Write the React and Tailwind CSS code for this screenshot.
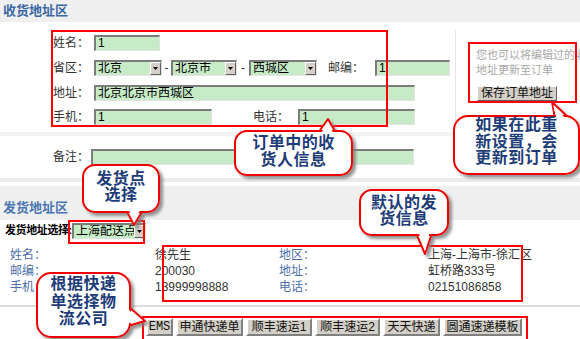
import React from 'react';

const Field = ({ w, value }) => (
  <div className={`h-[16px] shrink-0 bg-[#c6ebc6] border-t-2 border-l-2 border-t-[#7c7c7c] border-l-[#7c7c7c] border-b border-r border-b-[#e4e4e4] border-r-[#e4e4e4] pl-[2px] text-[12px] leading-[13px] text-black whitespace-nowrap overflow-hidden ${w}`}>
    {value}
  </div>
);

const Arrow = () => (
  <div className="w-[11px] h-full shrink-0 bg-[#d4d0c8] border border-t-white border-l-white border-b-[#606060] border-r-[#606060] flex items-center justify-center">
    <svg width="5" height="3" viewBox="0 0 5 3"><path d="M0 0h5L2.5 3z" fill="#000" /></svg>
  </div>
);

const Select = ({ w, value }) => (
  <div className={`h-[16px] shrink-0 flex bg-[#c6ebc6] border-t-2 border-l-2 border-t-[#7c7c7c] border-l-[#7c7c7c] border-b border-r border-b-[#e4e4e4] border-r-[#e4e4e4] ${w}`}>
    <div className="flex-1 min-w-0 pl-[2px] text-[12px] leading-[13px] text-black whitespace-nowrap overflow-hidden">{value}</div>
    <Arrow />
  </div>
);

const Label = ({ w, children }) => (
  <div className={`shrink-0 text-[12px] leading-[16px] text-[#333] ${w}`}>{children}</div>
);

const Tab = ({ w, children }) => (
  <div className={`h-[18px] shrink-0 bg-[#d4d0c8] border-2 border-t-white border-l-white border-b-[#808080] border-r-[#808080] text-[12px] leading-[14px] text-[#111] text-center whitespace-nowrap ${w}`}>
    {children}
  </div>
);

const callouts = [
  { x: 235, y: 131, w: 117, h: 44, r: 12, tail: '318,133 328,119 336,133', cover: '320,135 328,122 334,135', top: 134, lh: 'leading-[17px]', lines: ['订单中的收', '货人信息'] },
  { x: 454, y: 116, w: 125, h: 58, r: 14, tail: '555,118 552,102 569,118', cover: '557,120 553,105 567,120', top: 117, lh: 'leading-[16.5px]', lines: ['如果在此重', '新设置，会', '更新到订单'] },
  { x: 360, y: 190, w: 88, h: 45, r: 12, tail: '416,233 425,254 432,233', cover: '418,231 425,251 430,231', top: 195, lh: 'leading-[16px]', lines: ['默认的发', '货信息'] },
  { x: 83, y: 165, w: 76, h: 47, r: 12, tail: '126,210 134,225 143,210', cover: '128,208 134,222 141,208', top: 171, lh: 'leading-[16px]', lines: ['发货点', '选择'] },
  { x: 37, y: 273, w: 93, h: 64, r: 14, tail: '128,306 145,321 128,326', cover: '126,308 142,320 126,324', top: 275, lh: 'leading-[17.5px]', lines: ['根据快递', '单选择物', '流公司'] },
];

const marks = [
  'left-[51px] top-[30px] w-[337px] h-[97px]',
  'left-[468px] top-[42px] w-[109px] h-[61px]',
  'left-[162px] top-[245px] w-[361px] h-[57px]',
  'left-[68px] top-[220px] w-[77px] h-[24px]',
  'left-[142px] top-[316px] w-[386px] h-[26px]',
];

export default function App() {
  return (
    <div className="relative w-[580px] h-[339px] overflow-hidden bg-white font-['Liberation_Sans','Noto_Sans_CJK_SC',sans-serif]">
      {/* receiver section */}
      <div className="h-[22px] bg-[#efefef] px-[3px] flex items-center">
        <span className="text-[13px] font-bold text-[#3b68a4]">收货地址区</span>
      </div>

      <div className="h-[110px] flex">
        <div className="w-[455px] shrink-0 pl-[53px] pt-[13px] flex flex-col gap-[8px]">
          <div className="flex items-center">
            <Label w="w-[41px]">姓名：</Label>
            <Field w="w-[66px]" value="1" />
          </div>
          <div className="flex items-center">
            <Label w="w-[41px]">省区：</Label>
            <Select w="w-[68px]" value="北京" />
            <span className="w-[9px] text-center text-[12px] text-[#333]">-</span>
            <Select w="w-[66px]" value="北京市" />
            <span className="w-[12px] text-center text-[12px] text-[#333]">-</span>
            <Select w="w-[68px]" value="西城区" />
            <Label w="w-[47px] ml-[11px]">邮编：</Label>
            <Field w="w-[75px]" value="1" />
          </div>
          <div className="flex items-center">
            <Label w="w-[41px]">地址：</Label>
            <Field w="w-[321px]" value="北京北京市西城区" />
          </div>
          <div className="flex items-center">
            <Label w="w-[41px]">手机：</Label>
            <Field w="w-[118px]" value="1" />
            <Label w="w-[45px] ml-[41px]">电话：</Label>
            <Field w="w-[117px]" value="1" />
          </div>
        </div>
        <div className="flex-1 min-w-0 my-[8px] border-l border-[#e6e6e6] pl-[20px] pt-[18px] flex flex-col items-start">
          <p className="text-[11px] leading-[15px] text-[#a8a8a8] whitespace-nowrap">您也可以将编辑过的收货</p>
          <p className="text-[11px] leading-[15px] text-[#a8a8a8]">地址更新至订单</p>
          <div className="mt-[8px] ml-[1px] w-[80px] h-[15px] bg-[#d4d0c8] border border-t-white border-l-white border-b-[#606060] border-r-[#606060] text-[12px] leading-[13px] text-center text-[#111]">
            保存订单地址
          </div>
        </div>
      </div>

      <div className="h-[4px] bg-[#f3f3f3]" />
      <div className="h-[42px] pl-[53px] flex items-center">
        <Label w="w-[38px]">备注：</Label>
        <Field w="w-[323px]" value="" />
      </div>
      <div className="h-[4px] bg-[#ececec]" />
      <div className="h-[4px]" />

      {/* sender section */}
      <div className="h-[34px] bg-[#efefef] px-[3px] flex items-end pb-[3px]">
        <span className="text-[13px] font-bold text-[#4a77b2]">发货地址区</span>
      </div>
      <div className="h-[21px] pl-[5px] flex items-center">
        <span className="w-[67px] shrink-0 text-[11px] font-bold tracking-[-0.4px] text-black whitespace-nowrap">发货地址选择:</span>
        <Select w="w-[74px]" value="上海配送点" />
      </div>

      <div className="h-[64px] pt-[6px] flex text-[12px] leading-[16px]">
        <div className="w-[155px] pl-[10px] text-[#4a6ea8]">
          <div>姓名：</div>
          <div>邮编：</div>
          <div>手机：</div>
        </div>
        <div className="w-[124px] text-[#333]">
          <div>徐先生</div>
          <div>200030</div>
          <div>13999998888</div>
        </div>
        <div className="w-[149px] text-[#4a6ea8]">
          <div>地区：</div>
          <div>地址：</div>
          <div>电话：</div>
        </div>
        <div className="text-[#333]">
          <div>上海-上海市-徐汇区</div>
          <div>虹桥路333号</div>
          <div>02151086858</div>
        </div>
      </div>
      <div className="h-[2px] bg-[#dcdcdc]" />

      <div className="pt-[11px] pl-[146px] flex gap-[3px]">
        <Tab w="w-[27px] font-['Liberation_Mono',monospace] text-[11px]">EMS</Tab>
        <Tab w="w-[67px]">申通快递单</Tab>
        <Tab w="w-[66px]">顺丰速运1</Tab>
        <Tab w="w-[65px]">顺丰速运2</Tab>
        <Tab w="w-[57px]">天天快递</Tab>
        <Tab w="w-[79px]">圆通速递模板</Tab>
      </div>

      {/* annotation boxes */}
      {marks.map((m) => (
        <div key={m} className={`absolute border-2 border-[#ff0000] pointer-events-none ${m}`} />
      ))}

      {/* callout bubbles */}
      <svg className="absolute left-0 top-0 pointer-events-none" width="580" height="339">
        <defs>
          <filter id="sh" x="-20%" y="-20%" width="140%" height="140%">
            <feDropShadow dx="3" dy="3" stdDeviation="1.5" floodColor="#7a7a7a" floodOpacity="0.8" />
          </filter>
        </defs>
        {callouts.map((c, i) => (
          <g key={i} filter="url(#sh)">
            <polygon points={c.tail} fill="#fff" stroke="#f00000" strokeWidth="2" strokeLinejoin="round" />
            <rect x={c.x} y={c.y} width={c.w} height={c.h} rx={c.r} fill="#fff" stroke="#f00000" strokeWidth="2" />
            <polygon points={c.cover} fill="#fff" />
          </g>
        ))}
      </svg>
      {callouts.map((c, i) => (
        <div
          key={i}
          className={`absolute text-center text-[16px] font-bold tracking-[0.5px] text-[#1d3c78] ${c.lh}`}
          style={{ left: c.x, top: c.top, width: c.w }}
        >
          {c.lines.map((l) => (
            <div key={l}>{l}</div>
          ))}
        </div>
      ))}
    </div>
  );
}
